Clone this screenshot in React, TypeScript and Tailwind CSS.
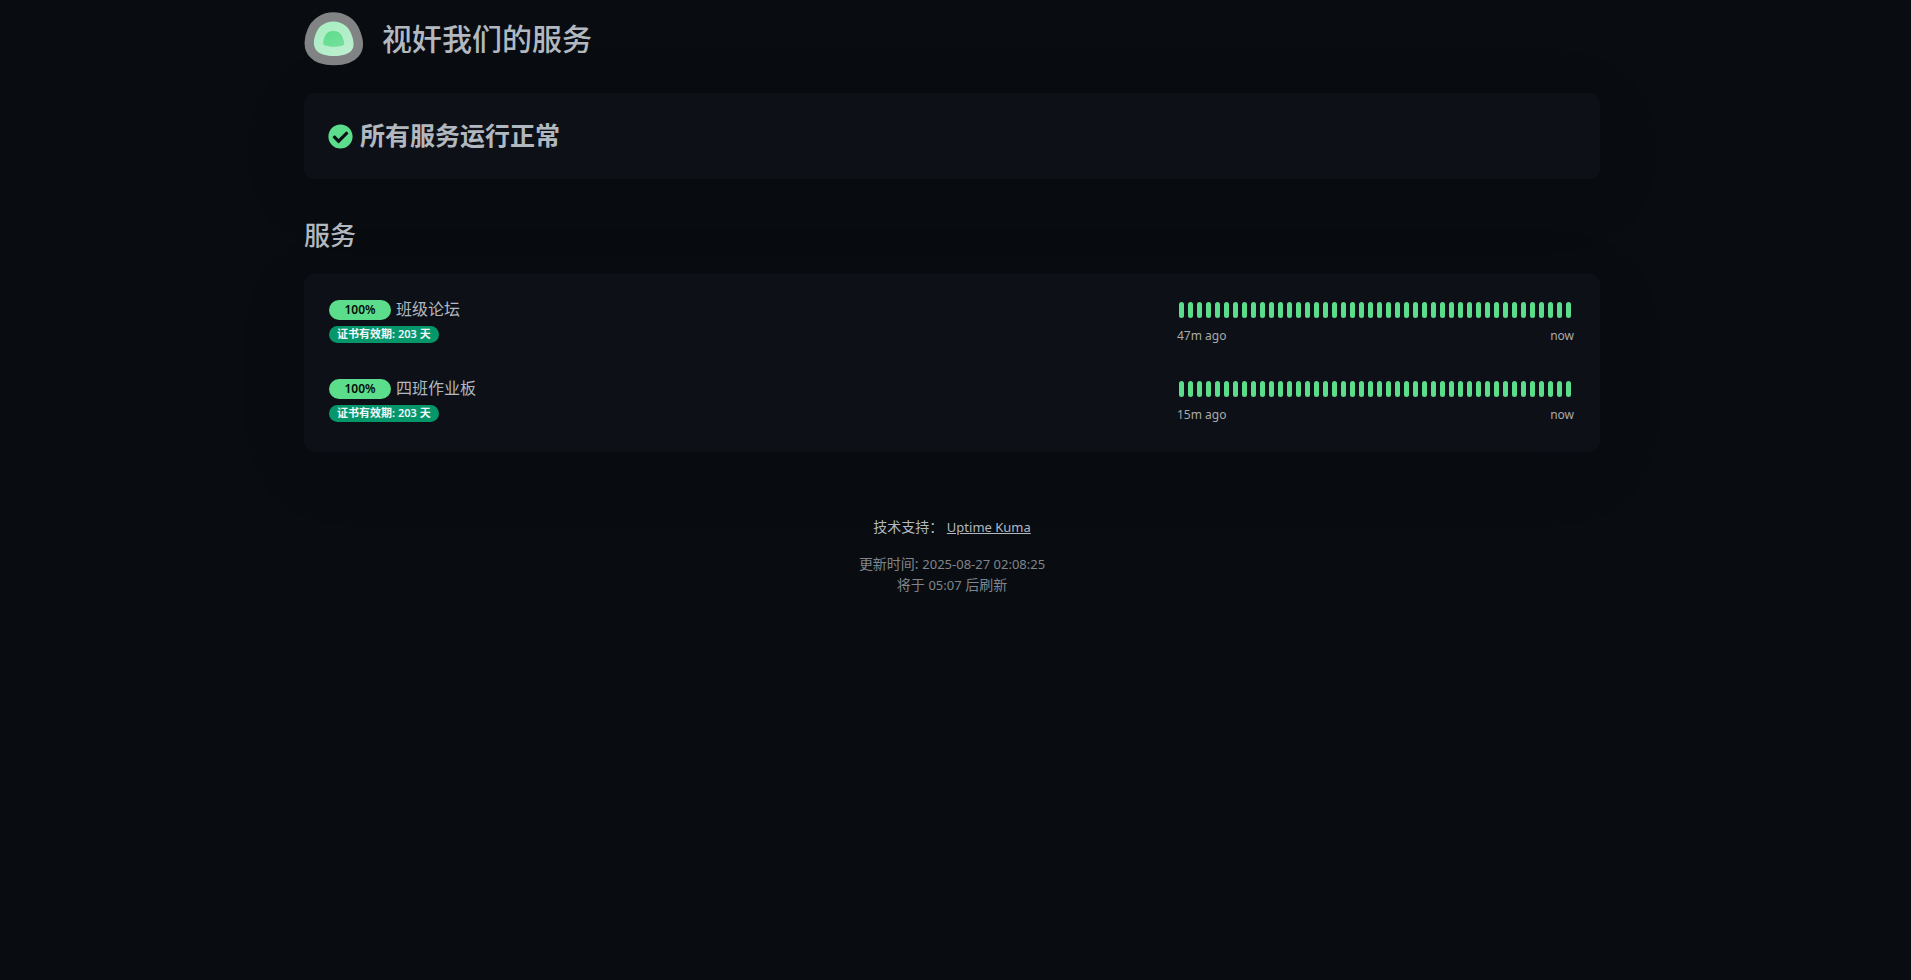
import { FaCheckCircle } from "react-icons/fa";

type Monitor = {
  name: string;
  uptime: string;
  certDays: number;
  since: string;
};

const MONITORS: Monitor[] = [
  { name: "班级论坛", uptime: "100%", certDays: 203, since: "47m ago" },
  { name: "四班作业板", uptime: "100%", certDays: 203, since: "15m ago" },
];

const BEATS = Array.from({ length: 44 }, (_, i) => i);

function Logo() {
  return (
    <svg className="h-[54px] w-[60px] shrink-0" viewBox="27 21 180 162" role="img" aria-label="Logo">
      <defs>
        <linearGradient id="logo-fill" x1="0.3" y1="0.2" x2="0.8" y2="1">
          <stop offset="0" stopColor="#5cdd8b" />
          <stop offset="1" stopColor="#7fe0a3" />
        </linearGradient>
      </defs>
      <path
        d="M63 85 C80 38 150 38 168 85 C176 104 180 126 169 137 C151 158 84 158 66 138 C53 126 55 104 63 85 Z"
        fill="url(#logo-fill)"
        stroke="#ffffff"
        strokeOpacity="0.49"
        strokeWidth="56"
      />
    </svg>
  );
}

function MonitorRow({ monitor }: { monitor: Monitor }) {
  return (
    <li className="flex items-start justify-between pt-[13px] pr-[10px] pb-[18px] pl-[9px]">
      <div>
        <div className="flex h-6 items-center gap-[5px]">
          <span className="mt-0.5 flex h-5 w-[62px] items-center justify-center rounded-full bg-[#5cdd8b] text-xs font-semibold text-[#020b05]">
            {monitor.uptime}
          </span>
          <span className="text-base">{monitor.name}</span>
        </div>
        <div className="mt-[5px] flex h-[17px] w-fit items-center rounded-full bg-[#059669] px-2 text-[11px] font-semibold whitespace-pre text-[#f0f6fc]">
          证书有效期: {monitor.certDays} 天
        </div>
      </div>
      <div className="w-[397px]">
        <div className="flex gap-1 px-0.5 pt-[5px]">
          {BEATS.map((i) => (
            <div key={i} className="h-4 w-[5px] rounded-full bg-[#5cdd8b]" />
          ))}
        </div>
        <div className="mt-[9px] flex justify-between text-xs leading-[18px] text-[#aaaaaa]">
          <span>{monitor.since}</span>
          <span>now</span>
        </div>
      </div>
    </li>
  );
}

export default function App() {
  return (
    <div className="min-h-screen bg-[#090c10] pr-[7px] font-['Noto_Sans','Noto_Sans_CJK_SC',sans-serif] text-[#b1b8c0]">
      <main className="mx-auto max-w-[1320px] px-3 pt-3 pb-12" lang="zh-CN">
        <header className="flex items-center gap-[18px]">
          <Logo />
          <h1 className="text-[30px] leading-9 font-medium">视奸我们的服务</h1>
        </header>

        <section className="mt-[27px] flex h-[86px] items-center gap-[7px] rounded-[10px] bg-[#0d1117] px-6 text-[25px] font-bold shadow-[0_15px_70px_rgba(0,0,0,0.1)]">
          <FaCheckCircle className="text-[#5cdd8b]" />
          <span>所有服务运行正常</span>
        </section>

        <h2 className="mt-10 text-[26px] leading-8 font-medium">服务</h2>

        <ul className="mt-[23px] rounded-[10px] bg-[#0d1117] px-4 py-[10px] shadow-[0_15px_70px_rgba(0,0,0,0.1)]">
          {MONITORS.map((monitor) => (
            <MonitorRow key={monitor.name} monitor={monitor} />
          ))}
        </ul>

        <footer className="mt-16 text-center text-sm leading-[21px]">
          <p>
            技术支持：{" "}
            <a href="#" className="text-[13px] leading-none underline">
              Uptime Kuma
            </a>
          </p>
          <div className="mt-4 text-[#7f858c]">
            <div>
              更新时间: <span className="text-[13px] leading-none">2025-08-27 02:08:25</span>
            </div>
            <div>
              将于 <span className="text-[13px] leading-none">05:07</span> 后刷新
            </div>
          </div>
        </footer>
      </main>
    </div>
  );
}
